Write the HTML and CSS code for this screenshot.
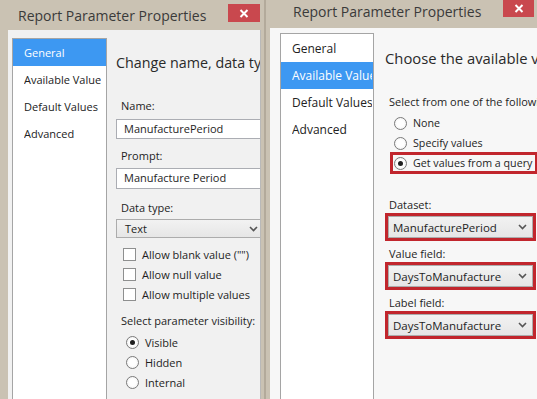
FILE: index.html
```html
<!DOCTYPE html>
<html>
<head>
<meta charset="utf-8">
<link rel="stylesheet" href="styles.css">
</head>
<body>
<div class="screen">
  <section class="win win-left">
    <header class="titlebar">
      <span class="title">Report Parameter Properties</span>
      <span class="close"><svg width="10" height="9" viewBox="0 0 10 9"><path d="M1.5 1 L8.5 8 M8.5 1 L1.5 8" stroke="#fff" stroke-width="2" fill="none"/></svg></span>
    </header>
    <div class="client">
      <nav class="nav">
        <div class="nav-item selected"><span>General</span></div>
        <div class="nav-item"><span>Available Values</span></div>
        <div class="nav-item"><span>Default Values</span></div>
        <div class="nav-item"><span>Advanced</span></div>
      </nav>
      <div class="content">
        <h1 class="heading">Change name, data type, and other options.</h1>
        <div class="label name-label">Name:</div>
        <div class="input name-input">ManufacturePeriod</div>
        <div class="label prompt-label">Prompt:</div>
        <div class="input prompt-input">Manufacture Period</div>
        <div class="label type-label">Data type:</div>
        <div class="select type-select"><span>Text</span><svg class="chev" width="9" height="6" viewBox="0 0 9 6"><path d="M1 1 L4.5 4.5 L8 1" stroke="#555" stroke-width="1.6" fill="none"/></svg></div>
        <div class="checks">
          <div class="check-row"><span class="checkbox"></span>Allow blank value ("")</div>
          <div class="check-row"><span class="checkbox"></span>Allow null value</div>
          <div class="check-row"><span class="checkbox"></span>Allow multiple values</div>
        </div>
        <div class="label vis-label">Select parameter visibility:</div>
        <div class="radios vis-radios">
          <div class="radio-row"><span class="radio checked"></span>Visible</div>
          <div class="radio-row"><span class="radio"></span>Hidden</div>
          <div class="radio-row"><span class="radio"></span>Internal</div>
        </div>
      </div>
    </div>
  </section>

  <section class="win win-right">
    <header class="titlebar">
      <span class="title">Report Parameter Properties</span>
      <span class="close"><svg width="10" height="9" viewBox="0 0 10 9"><path d="M1.5 1 L8.5 8 M8.5 1 L1.5 8" stroke="#fff" stroke-width="2" fill="none"/></svg></span>
    </header>
    <div class="client">
      <nav class="nav">
        <div class="nav-item"><span>General</span></div>
        <div class="nav-item selected"><span>Available Values</span></div>
        <div class="nav-item"><span>Default Values</span></div>
        <div class="nav-item"><span>Advanced</span></div>
      </nav>
      <div class="content">
        <h1 class="heading">Choose the available values for this parameter.</h1>
        <div class="label hint">Select from one of the following options:</div>
        <div class="radios opt-radios">
          <div class="radio-row"><span class="radio"></span>None</div>
          <div class="radio-row"><span class="radio"></span>Specify values</div>
          <div class="radio-row marked"><span class="radio checked"></span>Get values from a query</div>
        </div>
        <div class="label q-label dataset-label">Dataset:</div>
        <div class="hl"><div class="select"><span>ManufacturePeriod</span><svg class="chev" width="9" height="6" viewBox="0 0 9 6"><path d="M1 1 L4.5 4.5 L8 1" stroke="#555" stroke-width="1.6" fill="none"/></svg></div></div>
        <div class="label q-label">Value field:</div>
        <div class="hl"><div class="select"><span>DaysToManufacture</span><svg class="chev" width="9" height="6" viewBox="0 0 9 6"><path d="M1 1 L4.5 4.5 L8 1" stroke="#555" stroke-width="1.6" fill="none"/></svg></div></div>
        <div class="label q-label">Label field:</div>
        <div class="hl"><div class="select"><span>DaysToManufacture</span><svg class="chev" width="9" height="6" viewBox="0 0 9 6"><path d="M1 1 L4.5 4.5 L8 1" stroke="#555" stroke-width="1.6" fill="none"/></svg></div></div>
      </div>
    </div>
  </section>
</div>
</body>
</html>
```

FILE: styles.css
```css
* { box-sizing: border-box; }

body {
  margin: 0;
  font-family: "Open Sans", "Noto Sans", sans-serif;
  font-size: 11px;
  color: #1e1e1e;
  background: #c9c1b2;
  overflow: hidden;
}

.screen {
  display: flex;
  width: 537px;
  height: 399px;
  overflow: hidden;
}

.win {
  display: flex;
  flex-direction: column;
  flex: none;
  background: #cac2b3;
}

.win-left {
  width: 266px;
  border-right: 2px solid #b3aa9b;
}

.win-right {
  width: 280px;
}

.titlebar {
  display: flex;
  align-items: flex-start;
  flex: none;
}

.win-left .titlebar { height: 30px; padding-left: 18px; }
.win-right .titlebar { height: 28px; padding-left: 27px; }

.title {
  font-size: 14px;
  line-height: 20px;
  color: #3a3a3a;
  white-space: nowrap;
}

.win-left .title { margin-top: 6px; }
.win-right .title { margin-top: 2px; }

.close {
  margin-left: auto;
  display: flex;
  align-items: center;
  justify-content: center;
  background: #c9484e;
}

.win-left .close { width: 32px; height: 18px; margin-top: 4px; margin-right: 4px; }
.win-right .close { width: 31px; height: 17px; margin-right: 12px; }

.client {
  flex: 1;
  min-height: 0;
  display: flex;
  overflow: hidden;
  background: #f1f1f1;
}

.win-left .client { margin: 0 3px 0 8px; padding: 8px 0 0 4px; border-right: 1px solid #b9b9b9; }
.win-right .client { margin-left: 4px; padding: 5px 0 0 10px; background: #f7f7f7; }

.nav {
  flex: none;
  width: 95px;
  background: #fff;
  border: 1px solid #a5a5a5;
  border-bottom: none;
}

.win-right .nav { width: 94px; padding-top: 1px; }

.nav-item {
  height: 27px;
  line-height: 27px;
  padding-left: 11px;
  font-size: 11px;
  color: #222;
}

.nav-item span {
  display: block;
  overflow: hidden;
  white-space: nowrap;
  margin-right: 5px;
}

.win-right .nav-item { font-size: 12px; }
.win-right .nav-item span { margin-right: 1px; }

.nav-item.selected {
  background: #3d98f2;
  color: #fff;
}

.content {
  flex: 1;
  min-width: 0;
  overflow: hidden;
  padding-top: 15px;
}

.win-left .content { padding-left: 9px; }
.win-right .content { padding-left: 11px; }

.heading {
  margin: 0;
  font-size: 14.3px;
  font-weight: 400;
  line-height: 20px;
  white-space: nowrap;
  color: #2a2a2a;
}

.win-right .heading { font-size: 14.8px; }

.label {
  line-height: 16px;
  padding-left: 5px;
  white-space: nowrap;
}

.name-label { margin-top: 25px; }
.prompt-label { margin-top: 9px; }
.type-label { margin-top: 11px; }
.vis-label { margin-top: 9px; }

.input {
  width: 170px;
  height: 20px;
  line-height: 18px;
  padding-left: 7px;
  background: #fff;
  border: 1px solid #abadb3;
  white-space: nowrap;
}

.name-input { margin-top: 5px; }
.prompt-input { margin-top: 4px; height: 21px; }

.select {
  display: flex;
  align-items: center;
  justify-content: space-between;
  border: 1px solid #acacac;
  background: linear-gradient(#f2f2f2, #e6e6e6);
  white-space: nowrap;
}

.type-select {
  width: 150px;
  height: 19px;
  margin-top: 3px;
  padding: 0 7px 0 8px;
}

.checks { margin-top: 6px; padding-left: 7px; }

.check-row, .radio-row {
  display: flex;
  align-items: center;
  height: 20px;
  white-space: nowrap;
}

.checkbox {
  width: 13px;
  height: 13px;
  border: 1px solid #8e8f8f;
  background: #fff;
  margin-right: 6px;
  flex: none;
}

.radios { margin-top: 3px; }
.vis-radios { padding-left: 10px; }

.radio {
  width: 13px;
  height: 13px;
  border-radius: 50%;
  border: 1px solid #7a7a7a;
  background: radial-gradient(circle, #ffffff 40%, #ececec 100%);
  margin-right: 6px;
  flex: none;
  display: flex;
  align-items: center;
  justify-content: center;
}

.radio.checked::after {
  content: "";
  width: 5px;
  height: 5px;
  border-radius: 50%;
  background: #1f1f1f;
}

/* right window */
.hint { margin-top: 26px; padding-left: 4px; }
.opt-radios { padding-left: 9px; font-size: 10.7px; }

.radio-row.marked {
  margin-top: -1px;
  margin-left: -4px;
  padding-left: 4px;
  height: 22px;
  width: 148px;
  outline: 3px solid #c1262d;
  outline-offset: -3px;
}

.q-label {
  line-height: 14px;
  padding-left: 4px;
  margin-top: 6px;
}

.dataset-label { margin-top: 24px; }

.hl {
  width: 151px;
  border: 3px solid #c1262d;
  margin-top: 1px;
}

.hl .select {
  height: 22px;
  padding: 0 5px 0 4px;
  font-size: 11.5px;
}
```
